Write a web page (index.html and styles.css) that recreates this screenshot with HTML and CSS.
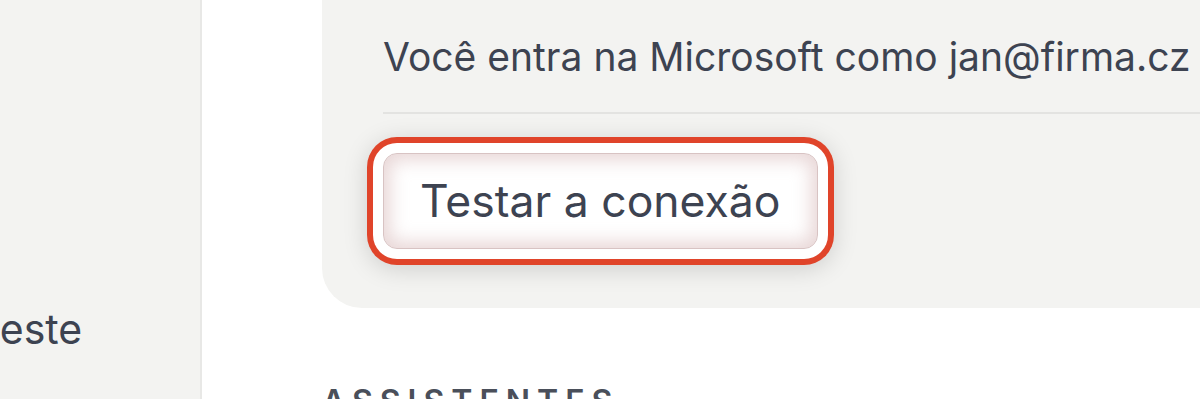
FILE: index.html
```html
<!DOCTYPE html>
<html lang="pt">
<head>
<meta charset="utf-8">
<title>Conexão</title>
<link rel="stylesheet" href="styles.css">
</head>
<body>
<div class="app">
  <aside class="sidebar">
    <div class="nav-item">Conexão de teste</div>
  </aside>
  <main class="main">
    <section class="card">
      <p class="card-text">Você entra na Microsoft como jan@firma.cz e a conta é verificada.</p>
      <hr class="divider">
      <div class="actions">
        <button class="btn" type="button">Testar a conexão</button>
      </div>
    </section>
    <h2 class="section-title">Assistentes</h2>
  </main>
</div>
</body>
</html>
```
FILE: styles.css
```css
* { box-sizing: border-box; }
html, body {
  margin: 0;
  padding: 0;
  height: 100%;
  overflow: hidden;
  background: #ffffff;
  font-family: "Inter", "Noto Sans", sans-serif;
  color: #3d4351;
}
.app {
  display: flex;
  height: 399px;
  overflow: hidden;
}
.sidebar {
  flex: 0 0 202px;
  background: #f3f3f1;
  border-right: 2px solid #e8e8e6;
  padding-top: 299px;
  overflow: hidden;
}
.nav-item {
  font-size: 41px;
  line-height: 60px;
  white-space: nowrap;
  margin-left: -257px;
}
.main {
  flex: 1;
  padding-left: 120px;
  min-width: 0;
}
.card {
  background: #f3f3f1;
  margin-right: -120px;
  border-radius: 0 0 40px 40px;
  padding: 27px 60px 59px 61px;
}
.card-text {
  margin: 0;
  font-size: 39px;
  line-height: 60px;
  white-space: nowrap;
}
.divider {
  border: 0;
  height: 2px;
  background: #e3e3e1;
  margin: 25px 0 39px;
}
.actions {
  display: flex;
}
.btn {
  font-family: "Inter", "Noto Sans", sans-serif;
  font-size: 44.5px;
  line-height: 48px;
  color: #3d4351;
  padding: 23px 36px;
  border: 1.5px solid #d8c3c3;
  border-radius: 14px;
  background: #ffffff;
  box-shadow:
    inset 0 0 18px 6px rgba(205, 165, 165, 0.45),
    0 0 0 10px #ffffff,
    0 0 0 16px #e0442a,
    0 4px 24px 16px rgba(0, 0, 0, 0.15);
}
.section-title {
  margin: 75px 0 0;
  font-size: 32px;
  line-height: 38px;
  font-weight: 600;
  letter-spacing: 7px;
  text-transform: uppercase;
  color: #4a4f5a;
}
```
